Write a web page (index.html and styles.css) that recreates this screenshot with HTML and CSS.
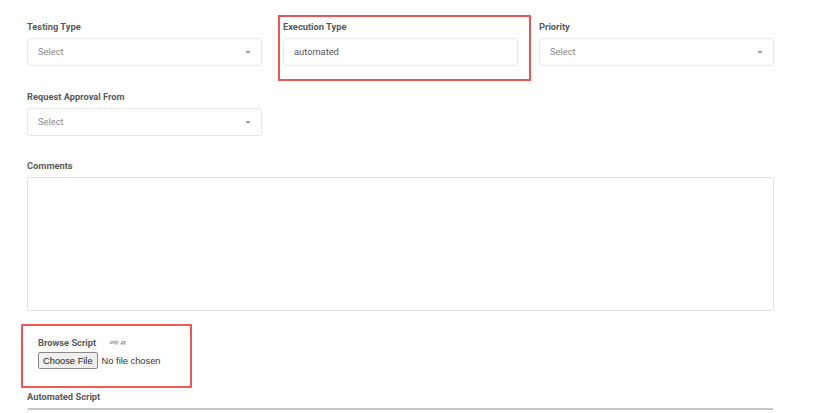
FILE: index.html
```html
<!DOCTYPE html>
<html lang="en">
<head>
  <meta charset="UTF-8">
  <meta name="viewport" content="width=device-width, initial-scale=1.0">
  <title>Test Case</title>
  <link rel="stylesheet" href="styles.css">
</head>
<body>
  <form class="form">
    <div class="row">
      <div class="field">
        <label>Testing Type</label>
        <div class="select">Select <span class="caret"></span></div>
      </div>
      <div class="field marked">
        <label>Execution Type</label>
        <div class="input">automated</div>
      </div>
      <div class="field">
        <label>Priority</label>
        <div class="select">Select <span class="caret"></span></div>
      </div>
    </div>

    <div class="row">
      <div class="field">
        <label>Request Approval From</label>
        <div class="select">Select <span class="caret"></span></div>
      </div>
    </div>

    <div class="field wide">
      <label>Comments</label>
      <textarea class="comments"></textarea>
    </div>

    <div class="browse marked">
      <div class="browse-label">Browse Script <small>only .py</small></div>
      <div class="file">
        <button type="button">Choose File</button>
        <span>No file chosen</span>
      </div>
    </div>

    <div class="field wide">
      <label>Automated Script</label>
      <textarea class="script"></textarea>
    </div>
  </form>
</body>
</html>
```

FILE: styles.css
```css
body {
  margin: 0;
  background: #fff;
  font-family: Roboto, "Liberation Sans", sans-serif;
  overflow: hidden;
}
.form {
  width: 747px;
  padding: 21px 0 0 27px;
}
.row {
  display: grid;
  grid-template-columns: repeat(3, 235px);
  gap: 21px;
  margin-bottom: 25px;
}
.row + .row { margin-bottom: 24px; }
.field { position: relative; }
.field label {
  display: block;
  font-size: 9.3px;
  line-height: 12px;
  font-weight: bold;
  color: #5a5a5a;
  margin-bottom: 5px;
}
.select, .input {
  position: relative;
  box-sizing: border-box;
  height: 28px;
  border: 1px solid #e8e8e8;
  border-radius: 3px;
  padding: 0 10px;
  font-size: 9.3px;
  line-height: 26px;
  color: #8a8a8a;
}
.input { color: #555; }
.caret {
  position: absolute;
  right: 10px;
  top: 12px;
  border-left: 3px solid transparent;
  border-right: 3px solid transparent;
  border-top: 3px solid #a0a0a0;
}
textarea {
  display: block;
  box-sizing: border-box;
  width: 747px;
  border: 1px solid #e2e2e2;
  border-radius: 2px;
  resize: none;
  font: inherit;
}
.comments { height: 134px; }
.wide { margin-bottom: 25px; }
.script {
  height: 20px;
  border-top: 2px solid #c8c8c8;
}

/* red highlight boxes */
.marked { position: relative; }
.marked::after {
  content: "";
  position: absolute;
  border: 2px solid #ea5756;
  pointer-events: none;
}
.field.marked::after {
  left: -5px;
  top: -6px;
  width: 249px;
  height: 62px;
}
.browse {
  margin-left: 11px;
  height: 55px;
}
.browse.marked::after {
  left: -17px;
  top: -12px;
  width: 167px;
  height: 60px;
}
.browse-label {
  font-size: 9.3px;
  line-height: 12px;
  font-weight: bold;
  color: #5a5a5a;
  margin-bottom: 3px;
}
.browse-label small {
  font-size: 5px;
  font-weight: normal;
  font-style: italic;
  margin-left: 11px;
  vertical-align: 2px;
}
.file {
  display: flex;
  align-items: center;
  gap: 4px;
  font-family: "Liberation Sans", Arial, sans-serif;
  font-size: 9.3px;
  color: #333;
}
.file button {
  height: 17px;
  padding: 0 4px;
  font: inherit;
  color: #222;
  background: #efefef;
  border: 1px solid #8a8a8a;
  border-radius: 2px;
}
```
